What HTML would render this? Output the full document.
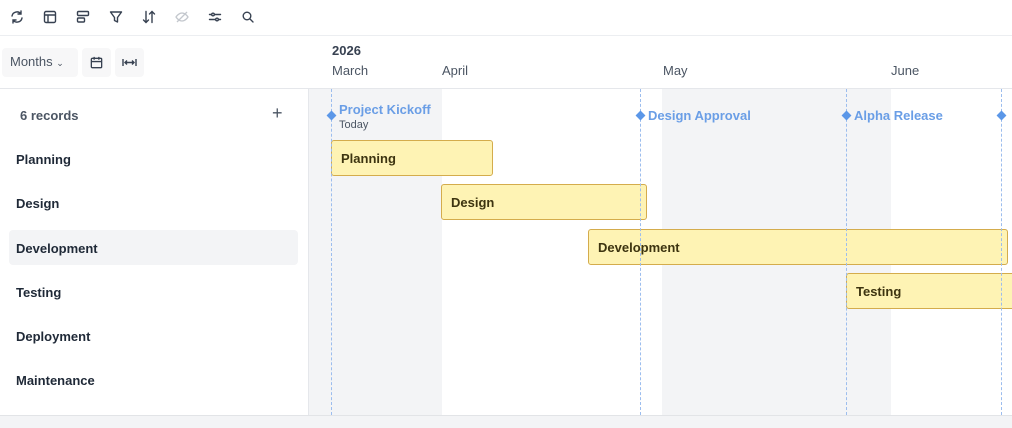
<!DOCTYPE html>
<html><head><style>
*{box-sizing:border-box;margin:0;padding:0}
body{width:1012px;height:428px;overflow:hidden;background:#fff;font-family:"Liberation Sans","Noto Sans CJK SC",sans-serif;color:#1f2937;position:relative}
.a{position:absolute}
.ic{position:absolute;top:9px;width:16px;height:16px}
.row{position:absolute;left:16px;font-size:13px;font-weight:bold;color:#1f2937}
.bar{position:absolute;height:36px;background:#fef3b4;border:1px solid #d4ac4c;border-radius:3px;font-size:13px;font-weight:bold;color:#3d3410;padding:0 0 0 9px;line-height:36px}
.dl{position:absolute;top:89px;height:326px;border-left:1px dashed #9cbdee;z-index:5}
.dm{position:absolute;width:7px;height:7px;background:#5b97e8;transform:rotate(45deg);z-index:6}
.ms{position:absolute;font-size:13px;font-weight:bold;color:#6a9ee6}
.mo{position:absolute;top:63px;font-size:13px;color:#4b5563}
</style></head><body>
<svg class="ic" style="left:9px" viewBox="0 0 16 16" fill="none" stroke="#374151" stroke-width="1.4" stroke-linecap="round"><path d="M3 7a5 5 0 0 1 9-2M13 9a5 5 0 0 1-9 2M12 2v3H9M4 14v-3h3"/></svg>
<svg class="ic" style="left:42px" viewBox="0 0 16 16" fill="none" stroke="#374151" stroke-width="1.4"><rect x="2.5" y="2.5" width="11" height="11" rx="1.5"/><path d="M2.5 6h11M6 6v7.5"/></svg>
<svg class="ic" style="left:75px" viewBox="0 0 16 16" fill="none" stroke="#374151" stroke-width="1.4"><rect x="2.5" y="2.5" width="11" height="4" rx="1"/><rect x="2.5" y="9" width="7" height="4" rx="1"/></svg>
<svg class="ic" style="left:108px" viewBox="0 0 16 16" fill="none" stroke="#374151" stroke-width="1.4" stroke-linejoin="round"><path d="M2.5 3h11l-4 5.5V13l-3-1.5V8.5z"/></svg>
<svg class="ic" style="left:141px" viewBox="0 0 16 16" fill="none" stroke="#374151" stroke-width="1.4" stroke-linecap="round"><path d="M5 2.5v11M2.5 11l2.5 2.5L7.5 11M11 13.5v-11M8.5 5L11 2.5 13.5 5"/></svg>
<svg class="ic" style="left:174px" viewBox="0 0 16 16" fill="none" stroke="#c4c8ce" stroke-width="1.3"><path d="M2 8s2.5-4 6-4 6 4 6 4-2.5 4-6 4-6-4-6-4zM3 13L13 3"/></svg>
<svg class="ic" style="left:207px" viewBox="0 0 16 16" fill="none" stroke="#374151" stroke-width="1.4" stroke-linecap="round"><path d="M2.5 5.5h11M2.5 10.5h11"/><circle cx="6" cy="5.5" r="1.3" fill="#fff"/><circle cx="10" cy="10.5" r="1.3" fill="#fff"/></svg>
<svg class="ic" style="left:240px" viewBox="0 0 16 16" fill="none" stroke="#374151" stroke-width="1.4" stroke-linecap="round"><circle cx="7" cy="7" r="3.8"/><path d="M10 10l3 3"/></svg>
<div class="a" style="left:0;top:35px;width:1012px;height:1px;background:#eceef1"></div>
<div class="a" style="left:2px;top:48px;width:76px;height:29px;background:#f7f7f8;border-radius:4px;font-size:13px;color:#4b5563;padding:6px 0 0 8px">Months <span style="font-size:9px">&#8964;</span></div>
<div class="a" style="left:82px;top:48px;width:29px;height:29px;background:#f7f7f8;border-radius:4px"></div>
<svg class="a" style="left:89px;top:55px" width="15" height="15" viewBox="0 0 16 16" fill="none" stroke="#374151" stroke-width="1.4"><rect x="2.5" y="3.5" width="11" height="10" rx="1"/><path d="M2.5 7h11M5.5 2v3M10.5 2v3"/></svg>
<div class="a" style="left:115px;top:48px;width:29px;height:29px;background:#f7f7f8;border-radius:4px"></div>
<svg class="a" style="left:121px;top:55px" width="17" height="15" viewBox="0 0 17 15" fill="none" stroke="#374151" stroke-width="1.4"><path d="M2 4v7M15 4v7M4 7.5h9M6 5.5L4 7.5l2 2M11 5.5l2 2-2 2"/></svg>
<div class="a" style="left:332px;top:43px;font-size:13px;font-weight:bold;color:#374151">2026</div>
<div class="mo" style="left:332px">March</div>
<div class="mo" style="left:442px">April</div>
<div class="mo" style="left:663px">May</div>
<div class="mo" style="left:891px">June</div>
<div class="a" style="left:0;top:88px;width:1012px;height:1px;background:#e5e7eb"></div>
<div class="a" style="left:308px;top:89px;width:1px;height:326px;background:#e5e7eb"></div>
<div class="a" style="left:309px;top:89px;width:133px;height:326px;background:#f3f4f6"></div>
<div class="a" style="left:662px;top:89px;width:229px;height:326px;background:#f3f4f6"></div>
<div class="a" style="left:0;top:415px;width:1012px;height:13px;background:#f3f4f6;border-top:1px solid #e2e4e7"></div>
<div class="a" style="left:20px;top:108px;font-size:13px;color:#4b5563;font-weight:bold">6 records</div>
<div class="a" style="left:272px;top:103px;font-size:18px;color:#4b5563">+</div>
<div class="a" style="left:9px;top:230px;width:289px;height:35px;background:#f3f4f6;border-radius:4px"></div>
<div class="row" style="top:152px">Planning</div>
<div class="row" style="top:196px">Design</div>
<div class="row" style="top:241px">Development</div>
<div class="row" style="top:285px">Testing</div>
<div class="row" style="top:329px">Deployment</div>
<div class="row" style="top:373px">Maintenance</div>
<div class="dl" style="left:331px"></div><div class="dl" style="left:640px"></div><div class="dl" style="left:846px"></div><div class="dl" style="left:1001px"></div>
<div class="dm" style="left:328px;top:112px"></div><div class="dm" style="left:637px;top:112px"></div><div class="dm" style="left:843px;top:112px"></div><div class="dm" style="left:998px;top:112px"></div>
<div class="ms" style="left:339px;top:102px">Project Kickoff</div>
<div class="a" style="left:339px;top:119px;font-size:11px;color:#4b5563">Today</div>
<div class="ms" style="left:648px;top:108px">Design Approval</div>
<div class="ms" style="left:854px;top:108px">Alpha Release</div>
<div class="bar" style="left:331px;top:140px;width:162px">Planning</div>
<div class="bar" style="left:441px;top:184px;width:206px">Design</div>
<div class="bar" style="left:588px;top:229px;width:420px">Development</div>
<div class="bar" style="left:846px;top:273px;width:180px">Testing</div>
</body></html>
